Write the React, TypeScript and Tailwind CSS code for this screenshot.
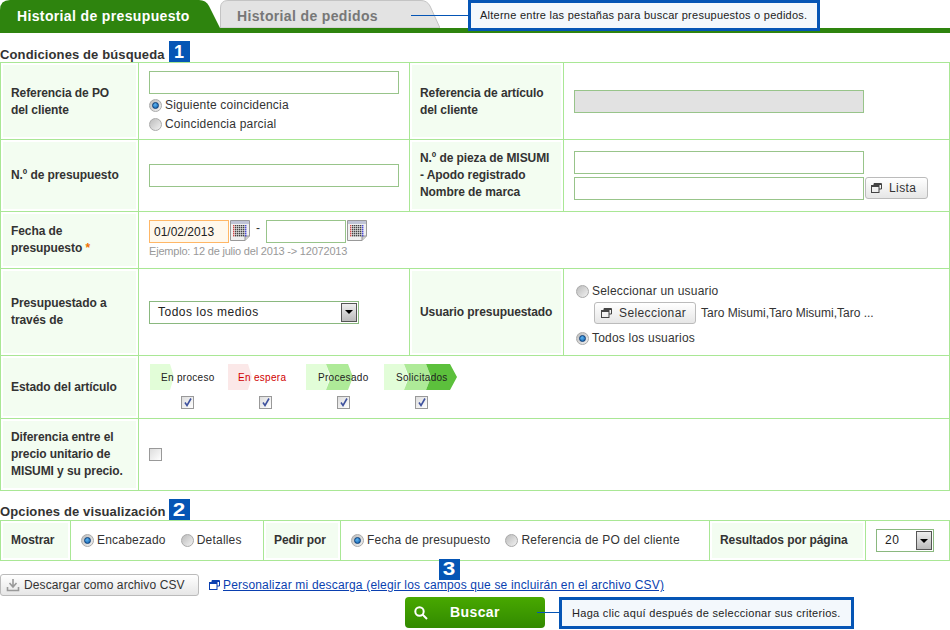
import React from 'react';

const labelCell = 'border-r border-b border-[#a9e795] p-[2px] flex';
const labelInner = 'flex-1 bg-[#f3fdf1] flex items-center pl-[8px] font-bold text-[12px] leading-[17px] text-[#333] tracking-[-0.08px]';
const fieldCell = 'border-r border-b border-[#a9e795]';
const inputCls = 'block border border-[#98c48a] h-[23px]';

function Radio({ on }: { on?: boolean }) {
  return (
    <span className="inline-flex w-[13px] h-[13px] shrink-0 items-center justify-center rounded-full border border-[#aaa] bg-[linear-gradient(135deg,#bbb,#f2f2f2)]">
      {on && <span className="w-[7px] h-[7px] rounded-full border border-[#0a3c78] bg-[radial-gradient(circle_at_40%_35%,#5fb4f0,#0a5aa8)]" />}
    </span>
  );
}

function Check({ on }: { on?: boolean }) {
  return (
    <span className="block w-[13px] h-[13px] border border-[#999] bg-[linear-gradient(135deg,#ddd,#fff)]">
      {on && (
        <svg viewBox="0 0 11 11" className="w-[11px] h-[11px]">
          <path d="M3 5.5 L5 8.5 L9 1.5" fill="none" stroke="#3f529e" strokeWidth="1.6" />
        </svg>
      )}
    </span>
  );
}

function WinIcon({ color = '#444' }: { color?: string }) {
  return (
    <svg viewBox="0 0 11 10" className="w-[11px] h-[10px] shrink-0" fill="none" stroke={color}>
      <path d="M3 2.5 V0.5 H10.5 V6 H8" />
      <rect x="0.5" y="2.5" width="7.5" height="7" />
      <path d="M0.5 3.5 H8 M3 1.5 H10.5" />
    </svg>
  );
}

function Calendar() {
  const rows = [0, 1, 2, 3, 4, 5];
  const cols = [0, 1, 2, 3, 4, 5, 6];
  return (
    <svg viewBox="0 0 20 21" className="w-[20px] h-[21px] shrink-0">
      <path d="M0.5 0.5 H19.5 V16 L15 20.5 H0.5 Z" fill="#f0f0f0" stroke="#999" />
      <path d="M15 20.5 V16 H19.5" fill="#ccc" stroke="#999" />
      <rect x="1" y="1" width="18" height="3" fill="#c0c4d6" />
      {rows.map((r) =>
        cols.map((c) => (
          <rect
            key={`${r}-${c}`}
            x={3 + c * 2}
            y={5 + r * 2}
            width="1.4"
            height="1.4"
            fill={c === 0 ? '#d04848' : c === 6 ? '#4848d8' : '#444'}
          />
        ))
      )}
    </svg>
  );
}

function SelectBox({ value, className }: { value: string; className: string }) {
  return (
    <div className={`border border-[#8ab87f] h-[23px] flex items-stretch bg-white ${className}`}>
      <span className="flex-1 pl-[8px] text-[12px] leading-[21px] tracking-[0.5px] text-[#222]">{value}</span>
      <span className="w-[16px] m-[1px] border border-[#555] bg-[linear-gradient(#eee,#bbb)] flex items-center justify-center">
        <span className="w-0 h-0 border-x-[4px] border-x-transparent border-t-[4px] border-t-black" />
      </span>
    </div>
  );
}

function GrayButton({ children, className }: { children: React.ReactNode; className: string }) {
  return (
    <div className={`flex items-center border border-[#bbb] rounded-[3px] bg-[linear-gradient(#fff,#e6e6e6)] text-[12px] text-[#333] ${className}`}>
      {children}
    </div>
  );
}

function Badge({ n, wide }: { n: string; wide?: boolean }) {
  return (
    <span className="inline-flex w-[21px] h-[21px] items-center justify-center bg-[#0555b5] text-white font-bold text-[18px] leading-none">
      <span className={wide ? 'block scale-x-125' : 'block'}>{n}</span>
    </span>
  );
}

function Callout({ text, className }: { text: string; className: string }) {
  return (
    <div className={`border-[3px] border-[#0555b5] bg-[#f3f8fc] flex items-center whitespace-nowrap text-[11px] text-[#222] ${className}`}>
      {text}
    </div>
  );
}

function Status({ text, color, w, red, pos }: { text: string; color: number; w: number; red?: boolean; pos: string }) {
  const first = red ? '#fbe8e8' : '#e2fdd8';
  return (
    <div className="w-[78px] flex flex-col items-start">
      <div className="relative h-[26px] w-[76px]">
        <svg width={w} height="26" className="absolute left-0 top-0">
          <polygon points="0,0 20,0 24,13 20,26 0,26" fill={first} />
          {color > 1 && <polygon points="20,0 42,0 47,13 42,26 20,26 25,13" fill="#aeea98" />}
          {color > 2 && <polygon points="42,0 66,0 73,13 66,26 42,26 47,13" fill="#5cc03c" />}
        </svg>
        <span className={`absolute top-0 h-[26px] flex items-center whitespace-nowrap text-[10px] tracking-[0.3px] ${pos} ${red ? 'text-[#d00000]' : 'text-[#222]'}`}>
          {text}
        </span>
      </div>
      <div className="mt-[6px] ml-[31px]">
        <Check on />
      </div>
    </div>
  );
}

function RadioText({ on, text, className = '' }: { on?: boolean; text: string; className?: string }) {
  return (
    <div className={`flex items-center gap-[3px] text-[12px] tracking-[0.2px] text-[#333] ${className}`}>
      <Radio on={on} />
      <span className="relative top-[-1px]">{text}</span>
    </div>
  );
}

export default function App() {
  return (
    <div className="w-[950px] h-[630px] overflow-hidden bg-white font-['Liberation_Sans',Arial,sans-serif] text-[#333]">
      {/* tabs */}
      <div className="relative h-[33px] border-b-[5px] border-[#2e840e]">
        <div className="flex h-[28px]">
          <div className="relative w-[220px] h-[28px]">
            <svg width="220" height="28" className="absolute inset-0">
              <path d="M0 28 V10 Q0 0 10 0 H199 Q206 0 209 6 L220 28 Z" fill="#2e840e" />
            </svg>
            <span className="absolute left-[17px] top-[8px] font-bold text-[14px] leading-[17px] tracking-[0.36px] text-white">Historial de presupuesto</span>
          </div>
          <div className="relative w-[220px] h-[28px]">
            <svg width="220" height="28" className="absolute inset-0">
              <path d="M0.5 28 V8 Q0.5 0.5 8 0.5 H201 Q207 0.5 210 6 L220 28 Z" fill="#e3e3e3" stroke="#c4c4c4" />
            </svg>
            <span className="absolute left-[17px] top-[8px] font-bold text-[14px] leading-[17px] tracking-[0.36px] text-[#777]">Historial de pedidos</span>
          </div>
        </div>
        <div className="absolute left-[411px] top-[15px] w-[58px] h-px bg-[#0555b5]" />
        <Callout text="Alterne entre las pestañas para buscar presupuestos o pedidos." className="absolute left-[468px] top-[0px] w-[352px] h-[31px] pl-[9px] tracking-[0.25px]" />
      </div>

      {/* search conditions */}
      <div className="h-[29px] flex items-end gap-[4px]">
        <span className="font-bold text-[13px] leading-[14px] tracking-[0.12px] text-[#333]">Condiciones de búsqueda</span>
        <Badge n="1" />
      </div>
      <div className="grid grid-cols-[138px_271px_154px_386px] grid-rows-[77px_72px_57px_87px_63px_72px] border-t border-l border-[#a9e795] w-[950px]">
        <div className={labelCell}><div className={`${labelInner} pt-[1px]`}>Referencia de PO<br />del cliente</div></div>
        <div className={`${fieldCell} pl-[10px] pt-[8px]`}>
          <div className={`${inputCls} w-[250px] bg-white`} />
          <RadioText on text="Siguiente coincidencia" className="mt-[2px] h-[19px]" />
          <RadioText text="Coincidencia parcial" className="h-[19px]" />
        </div>
        <div className={labelCell}><div className={`${labelInner} pt-[1px]`}>Referencia de artículo<br />del cliente</div></div>
        <div className={`${fieldCell} pl-[10px] flex items-center`}>
          <div className={`${inputCls} w-[290px] bg-[#e2e2e2]`} />
        </div>

        <div className={labelCell}><div className={labelInner}>N.º de presupuesto</div></div>
        <div className={`${fieldCell} pl-[10px] flex items-center`}>
          <div className={`${inputCls} w-[250px] bg-white`} />
        </div>
        <div className={labelCell}><div className={labelInner}>N.º de pieza de MISUMI<br />- Apodo registrado<br />Nombre de marca</div></div>
        <div className={`${fieldCell} pl-[10px] pt-[11px]`}>
          <div className={`${inputCls} w-[290px] bg-white`} />
          <div className="flex mt-[3px]">
            <div className={`${inputCls} w-[290px] bg-white`} />
            <GrayButton className="w-[63px] h-[22px] ml-px pl-[5px] gap-[7px] tracking-[0.4px]"><WinIcon />Lista</GrayButton>
          </div>
        </div>

        <div className={labelCell}><div className={labelInner}><div>Fecha de<br />presupuesto <span className="text-[#f07000]">*</span></div></div></div>
        <div className={`${fieldCell} col-span-3 pl-[10px] pt-[8px]`}>
          <div className="flex items-start">
            <div className="w-[80px] h-[23px] border border-[#ffb766] bg-[#fff8ec] pl-[4px] text-[12px] leading-[22px] text-[#222]">01/02/2013</div>
            <div className="ml-px"><Calendar /></div>
            <span className="w-[16px] text-center text-[12px] leading-[16px]">-</span>
            <div className={`${inputCls} w-[80px] bg-white`} />
            <div className="ml-px"><Calendar /></div>
          </div>
          <div className="text-[11px] leading-[13px] mt-[2px] tracking-[-0.2px] text-[#999]">Ejemplo: 12 de julio del 2013 -&gt; 12072013</div>
        </div>

        <div className={labelCell}><div className={labelInner}>Presupuestado a<br />través de</div></div>
        <div className={`${fieldCell} pl-[10px] flex items-center`}>
          <SelectBox value="Todos los medios" className="w-[210px]" />
        </div>
        <div className={labelCell}><div className={labelInner}>Usuario presupuestado</div></div>
        <div className={`${fieldCell} pl-[12px] pt-[13px]`}>
          <RadioText text="Seleccionar un usuario" className="h-[19px] gap-[2px]" />
          <div className="flex items-center ml-[18px] mt-[1px]">
            <GrayButton className="w-[102px] h-[22px] pl-[6px] gap-[7px] tracking-[0.4px]"><WinIcon />Seleccionar</GrayButton>
            <span className="ml-[5px] text-[12px] text-[#333]">Taro Misumi,Taro Misumi,Taro ...</span>
          </div>
          <RadioText on text="Todos los usuarios" className="h-[19px] mt-[5px] gap-[2px]" />
        </div>

        <div className={labelCell}><div className={labelInner}>Estado del artículo</div></div>
        <div className={`${fieldCell} col-span-3 pl-[11px] pt-[8px] flex items-start`}>
          <Status text="En proceso" color={1} w={26} pos="left-[11px]" />
          <Status text="En espera" color={1} w={26} red pos="left-[10px]" />
          <Status text="Procesado" color={2} w={50} pos="left-[12px]" />
          <Status text="Solicitados" color={3} w={75} pos="left-[12px]" />
        </div>

        <div className={labelCell}><div className={labelInner}><div>Diferencia entre el<br />precio unitario de<br />MISUMI y su precio.</div></div></div>
        <div className={`${fieldCell} col-span-3 pl-[10px] flex items-center`}>
          <Check />
        </div>
      </div>

      {/* display options */}
      <div className="h-[29px] flex items-end gap-[3px]">
        <span className="font-bold text-[13px] leading-[16px] tracking-[0.12px] text-[#333]">Opciones de visualización</span>
        <Badge n="2" wide />
      </div>
      <div className="grid grid-cols-[70px_193px_77px_369px_156px_84px] h-[41px] border-t border-l border-[#a9e795] w-[950px]">
        <div className={labelCell}><div className={labelInner}>Mostrar</div></div>
        <div className={`${fieldCell} pl-[10px] flex items-center`}>
          <RadioText on text="Encabezado" />
          <RadioText text="Detalles" className="ml-[15px]" />
        </div>
        <div className={labelCell}><div className={labelInner}>Pedir por</div></div>
        <div className={`${fieldCell} pl-[10px] flex items-center`}>
          <RadioText on text="Fecha de presupuesto" />
          <RadioText text="Referencia de PO del cliente" className="ml-[15px]" />
        </div>
        <div className={labelCell}><div className={labelInner}>Resultados por página</div></div>
        <div className={`${fieldCell} pl-[10px] flex items-center`}>
          <SelectBox value="20" className="w-[58px]" />
        </div>
      </div>

      {/* footer */}
      <div className="relative">
        <div className="absolute left-[439px] top-[-3px]"><Badge n="3" wide /></div>
        <div className="flex items-center pt-[13px]">
          <GrayButton className="w-[199px] h-[22px] pl-[5px] gap-[4px] tracking-[0.1px]">
            <svg viewBox="0 0 14 14" className="w-[14px] h-[14px] shrink-0" fill="none" stroke="#999" strokeWidth="1.6">
              <path d="M7 1 V8 M3.5 5 L7 9 L10.5 5 M1.5 9 V12.5 H12.5 V9" />
            </svg>
            Descargar como archivo CSV
          </GrayButton>
          <div className="ml-[10px]"><WinIcon color="#0a3fb0" /></div>
          <a className="ml-[3px] text-[12px] tracking-[0.18px] text-[#0a3fb0] underline">Personalizar mi descarga (elegir los campos que se incluirán en el archivo CSV)</a>
        </div>
        <div className="relative flex pl-[405px] pt-[1px]">
          <div className="w-[140px] h-[31px] rounded-[4px] bg-[linear-gradient(#48a800,#328a00)] flex items-center text-white font-bold text-[14px] tracking-[0.4px]">
            <svg viewBox="0 0 14 14" className="w-[14px] h-[14px] ml-[9px]" fill="none" stroke="#fff" strokeWidth="2">
              <circle cx="5.5" cy="5.5" r="4.2" />
              <path d="M8.5 8.5 L13 13" />
            </svg>
            <span className="ml-[22px]">Buscar</span>
          </div>
          <div className="absolute left-[537px] top-[16px] w-[22px] h-px bg-[#0555b5]" />
          <Callout text="Haga clic aquí después de seleccionar sus criterios." className="absolute left-[559px] top-[1px] w-[295px] h-[32px] pl-[10px] tracking-[0.3px]" />
        </div>
      </div>
    </div>
  );
}
